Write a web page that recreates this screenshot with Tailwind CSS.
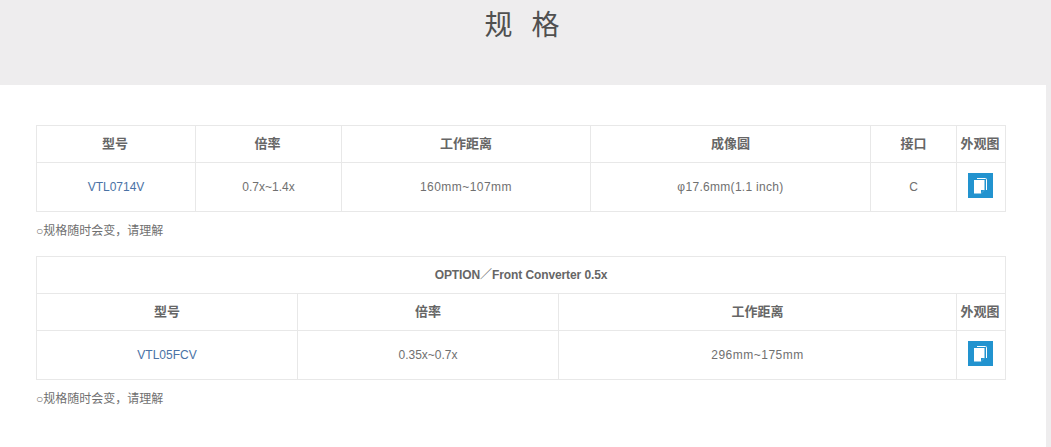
<!DOCTYPE html>
<html lang="zh">
<head>
  <meta charset="UTF-8">
  <title>规格</title>
  <script src="https://cdn.jsdelivr.net/npm/@tailwindcss/browser@4"></script>
</head>
<body class="bg-[#eeedee] h-[447px] overflow-hidden font-['Liberation_Sans','Noto_Sans_CJK_SC',sans-serif] text-[#707070] text-[12px]">
  <!-- title band -->
  <div class="h-[85px] pt-[8px] text-center">
    <h1 class="text-[28px] leading-[36px] text-[#505050] tracking-[19px] pl-[12px]">规格</h1>
  </div>

  <div class="bg-white w-[1046px] h-[362px] pt-[40px] pl-[36px]">
    <!-- spec table -->
    <table class="table-fixed border-collapse w-[969px] text-center">
      <colgroup>
        <col class="w-[159px]"><col class="w-[146px]"><col class="w-[249px]"><col class="w-[280px]"><col class="w-[86px]"><col class="w-[49px]">
      </colgroup>
      <tr class="h-[37px] text-[13px] font-bold text-[#666666]">
        <th class="border border-[#e8e8e8] pr-[2px]">型号</th>
        <th class="border border-[#e8e8e8] pr-[2px]">倍率</th>
        <th class="border border-[#e8e8e8]">工作距离</th>
        <th class="border border-[#e8e8e8]">成像圆</th>
        <th class="border border-[#e8e8e8]">接口</th>
        <th class="border border-[#e8e8e8] pr-[2px]">外观图</th>
      </tr>
      <tr class="h-[49px]">
        <td class="border border-[#e8e8e8] text-[#4a72a5]">VTL0714V</td>
        <td class="border border-[#e8e8e8]">0.7x~1.4x</td>
        <td class="border border-[#e8e8e8] tracking-[0.45px]">160mm~107mm</td>
        <td class="border border-[#e8e8e8] tracking-[0.3px]">φ17.6mm(1.1 inch)</td>
        <td class="border border-[#e8e8e8]">C</td>
        <td class="border border-[#e8e8e8] pr-[2px] pb-[3px]">
          <span class="inline-flex items-center justify-center w-[25px] h-[25px] bg-[#2293cf] align-middle">
            <svg width="15" height="17" viewBox="0 0 15 17">
              <path d="M4 1.5h8.5a1 1 0 0 1 1 1V13" fill="none" stroke="#fff" stroke-width="1"/>
              <path d="M1 3h10.5v10l-3.5 3.5H1z" fill="#fff"/>
              <path d="M8 16.5V13h3.5z" fill="#2293cf"/>
            </svg>
          </span>
        </td>
      </tr>
    </table>
    <p class="mt-[10px] leading-[18px]">○规格随时会变，请理解</p>

    <!-- option table -->
    <table class="table-fixed border-collapse w-[969px] text-center mt-[16px]">
      <colgroup>
        <col class="w-[261px]"><col class="w-[261px]"><col class="w-[398px]"><col class="w-[49px]">
      </colgroup>
      <tr class="h-[37px] font-bold text-[#666666]">
        <th colspan="4" class="border border-[#e8e8e8] tracking-[-0.1px]">OPTION／Front Converter 0.5x</th>
      </tr>
      <tr class="h-[37px] text-[13px] font-bold text-[#666666]">
        <th class="border border-[#e8e8e8]">型号</th>
        <th class="border border-[#e8e8e8]">倍率</th>
        <th class="border border-[#e8e8e8]">工作距离</th>
        <th class="border border-[#e8e8e8] pr-[2px]">外观图</th>
      </tr>
      <tr class="h-[49px]">
        <td class="border border-[#e8e8e8] text-[#4a72a5]">VTL05FCV</td>
        <td class="border border-[#e8e8e8]">0.35x~0.7x</td>
        <td class="border border-[#e8e8e8] tracking-[0.5px]">296mm~175mm</td>
        <td class="border border-[#e8e8e8] pr-[2px] pb-[3px]">
          <span class="inline-flex items-center justify-center w-[25px] h-[25px] bg-[#2293cf] align-middle">
            <svg width="15" height="17" viewBox="0 0 15 17">
              <path d="M4 1.5h8.5a1 1 0 0 1 1 1V13" fill="none" stroke="#fff" stroke-width="1"/>
              <path d="M1 3h10.5v10l-3.5 3.5H1z" fill="#fff"/>
              <path d="M8 16.5V13h3.5z" fill="#2293cf"/>
            </svg>
          </span>
        </td>
      </tr>
    </table>
    <p class="mt-[10px] leading-[18px]">○规格随时会变，请理解</p>
  </div>
</body>
</html>
